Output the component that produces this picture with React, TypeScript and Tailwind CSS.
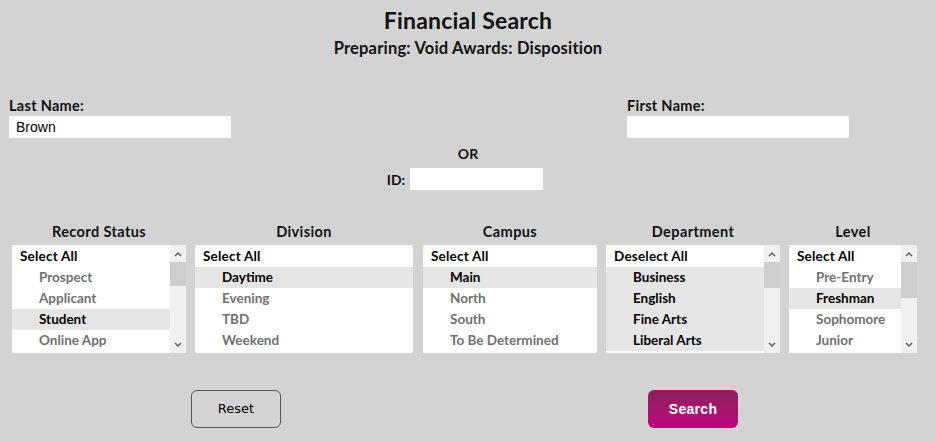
import React from "react";

type Item = { label: string; selected?: boolean };

type ListBox = {
  title: string;
  width: string;
  head: string;
  items: Item[];
  scroll?: { thumbH: string };
};

const font = "font-['Lato','DejaVu_Sans',sans-serif]";

const lists: ListBox[] = [
  {
    title: "Record Status",
    width: "w-[174px]",
    head: "Select All",
    items: [
      { label: "Prospect" },
      { label: "Applicant" },
      { label: "Student", selected: true },
      { label: "Online App" },
    ],
    scroll: { thumbH: "h-[24px]" },
  },
  {
    title: "Division",
    width: "w-[218px]",
    head: "Select All",
    items: [
      { label: "Daytime", selected: true },
      { label: "Evening" },
      { label: "TBD" },
      { label: "Weekend" },
    ],
  },
  {
    title: "Campus",
    width: "w-[174px]",
    head: "Select All",
    items: [
      { label: "Main", selected: true },
      { label: "North" },
      { label: "South" },
      { label: "To Be Determined" },
    ],
  },
  {
    title: "Department",
    width: "w-[174px]",
    head: "Deselect All",
    items: [
      { label: "Business", selected: true },
      { label: "English", selected: true },
      { label: "Fine Arts", selected: true },
      { label: "Liberal Arts", selected: true },
    ],
    scroll: { thumbH: "h-[26px]" },
  },
  {
    title: "Level",
    width: "w-[128px]",
    head: "Select All",
    items: [
      { label: "Pre-Entry" },
      { label: "Freshman", selected: true },
      { label: "Sophomore" },
      { label: "Junior" },
    ],
    scroll: { thumbH: "h-[36px]" },
  },
];

function Chevron({ up }: { up?: boolean }) {
  return (
    <svg width="8" height="6" viewBox="0 0 8 6" className="text-[#606060]">
      <path
        d={up ? "M1 5 L4 2 L7 5" : "M1 1 L4 4 L7 1"}
        fill="none"
        stroke="currentColor"
        strokeWidth="1.5"
      />
    </svg>
  );
}

function List({ box }: { box: ListBox }) {
  return (
    <div className={`flex flex-col items-center ${box.width}`}>
      <div className="h-[22px] text-[14.5px] font-bold leading-[22px] tracking-[0.4px] text-[#111]">
        {box.title}
      </div>
      <div className="mt-[2px] flex h-[108px] w-full bg-white">
        <div className="flex-1 pt-[1px]">
          <div className="flex h-[21px] items-center bg-white pl-[8px] text-[13.5px] font-bold tracking-[0.2px] text-black">
            {box.head}
          </div>
          {box.items.map((it) => (
            <div
              key={it.label}
              className={`flex h-[21px] items-center pl-[27px] text-[13.5px] font-bold ${
                it.selected ? "bg-[#e5e5e5] text-black" : "text-[#6f6f6f]"
              }`}
            >
              {it.label}
            </div>
          ))}
        </div>
        {box.scroll && (
          <div className="flex w-[16px] flex-col bg-[#f0f0f0]">
            <div className="flex h-[17px] items-center justify-center">
              <Chevron up />
            </div>
            <div className={`${box.scroll.thumbH} bg-[#cdcdcd]`} />
            <div className="flex-1" />
            <div className="flex h-[17px] items-center justify-center">
              <Chevron />
            </div>
          </div>
        )}
      </div>
    </div>
  );
}

export default function App() {
  return (
    <div className={`h-[442px] w-[936px] bg-[#d3d3d3] ${font} text-[#111]`}>
      {/* Heading */}
      <div className="flex flex-col items-center pt-[6px]">
        <h1 className="text-[23px] font-bold leading-[28px] tracking-[0.2px]">Financial Search</h1>
        <h2 className="mt-[4px] text-[16.5px] font-bold leading-[20px] tracking-[0.2px]">
          Preparing: Void Awards: Disposition
        </h2>
      </div>

      {/* Names */}
      <div className="mt-[38px] flex justify-between pl-[9px] pr-[87px]">
        <label className="flex flex-col">
          <span className="text-[14.5px] font-bold leading-[20px] tracking-[0.3px]">Last Name:</span>
          <div className="flex h-[22px] w-[222px] items-center bg-white pl-[7px] font-['Liberation_Sans',sans-serif] text-[14px] text-black">
            Brown
          </div>
        </label>
        <label className="flex flex-col">
          <span className="text-[14.5px] font-bold leading-[20px] tracking-[0.3px]">First Name:</span>
          <div className="h-[22px] w-[222px] bg-white" />
        </label>
      </div>

      {/* OR / ID */}
      <div className="flex flex-col items-center">
        <div className="mt-[6px] text-[14px] font-bold leading-[20px]">OR</div>
        <div className="mt-[4px] mr-[6px] flex items-center gap-[5px]">
          <span className="text-[14px] font-bold">ID:</span>
          <div className="h-[22px] w-[133px] bg-white" />
        </div>
      </div>

      {/* Lists */}
      <div className="mt-[31px] flex gap-[9px] pl-[12px]">
        {lists.map((b, i) => (
          <div key={b.title} className={i === 2 ? "ml-[1px]" : ""}>
            <List box={b} />
          </div>
        ))}
      </div>

      {/* Buttons */}
      <div className="mt-[37px] flex pl-[191px]">
        <button className="h-[38px] w-[90px] rounded-[6px] border border-[#555] bg-transparent font-['DejaVu_Sans',sans-serif] text-[13px] text-black">
          Reset
        </button>
        <button className="ml-[367px] h-[38px] w-[90px] rounded-[6px] bg-gradient-to-b from-[#8a1e60] to-[#c1007c] font-['Liberation_Sans',sans-serif] text-[14px] font-bold tracking-[0.3px] text-white">
          Search
        </button>
      </div>
    </div>
  );
}
